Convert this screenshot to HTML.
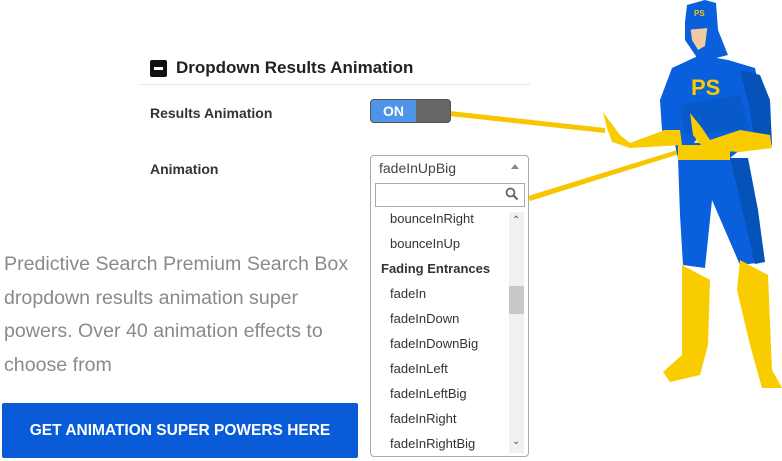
<!DOCTYPE html>
<html><head><style>
body{margin:0;width:782px;height:461px;background:#fff;position:relative;overflow:hidden;font-family:"Liberation Sans",sans-serif;color:#2b2b2b}
.a{position:absolute}
.hdr{left:140px;top:58px;width:390px;height:26px;border-bottom:1px solid #e6e6e6}
.opt{left:390px;font-size:13px;color:#333}
</style></head><body>
<div class="a hdr"></div>
<div class="a" style="left:150px;top:60px;width:17px;height:17px;background:#111;border-radius:2px"><div class="a" style="left:4px;top:7px;width:9px;height:3px;background:#fff"></div></div>
<div class="a" style="left:176px;top:58px;font-size:17px;font-weight:bold;color:#222">Dropdown Results Animation</div>
<div class="a" style="left:150px;top:105px;font-size:14px;font-weight:bold;color:#333">Results Animation</div>
<div class="a" style="left:150px;top:161px;font-size:14px;font-weight:bold;color:#333">Animation</div>
<svg class="a" style="left:0;top:0" width="782" height="461">
<polygon points="450,111 605,128 605,133 450,116" fill="#f7c600"/>
<polygon points="528,196 690,146 692,150 530,201" fill="#f7c600"/>
</svg>
<div class="a" style="left:370px;top:99px;width:81px;height:24px;background:#666;border-radius:4px;overflow:hidden;border:1px solid #555;box-sizing:border-box"><div style="width:45px;height:100%;background:#4f94e8;color:#fff;font-weight:bold;font-size:14px;text-align:center;line-height:22px">ON</div></div>
<div class="a" style="left:370px;top:155px;width:159px;height:302px;border:1px solid #aaa;border-radius:4px;box-sizing:border-box;background:#fff"></div>
<div class="a" style="left:379px;top:160px;font-size:14px;color:#444">fadeInUpBig</div>
<div class="a" style="left:511px;top:164px;width:0;height:0;border-left:4px solid transparent;border-right:4px solid transparent;border-bottom:5px solid #888"></div>
<div class="a" style="left:375px;top:183px;width:150px;height:24px;border:1px solid #aaa;box-sizing:border-box"></div>
<svg class="a" style="left:505px;top:187px" width="14" height="14"><circle cx="5.5" cy="5.5" r="4" fill="none" stroke="#666" stroke-width="1.8"/><line x1="8.5" y1="8.5" x2="12.5" y2="12.5" stroke="#666" stroke-width="2.2"/></svg>
<div class="a" style="left:509px;top:212px;width:15px;height:241px;background:#f1f1f1"></div>
<div class="a" style="left:509px;top:286px;width:15px;height:28px;background:#c8c8c8"></div>
<div class="a" style="left:512px;top:215px;font-size:10px;color:#555">&#8963;</div>
<div class="a" style="left:512px;top:436px;font-size:10px;color:#555">&#8964;</div>
<div class="a opt" style="top:211px">bounceInRight</div>
<div class="a opt" style="top:236px">bounceInUp</div>
<div class="a" style="left:381px;top:261px;font-size:13px;font-weight:bold;color:#333">Fading Entrances</div>
<div class="a opt" style="top:286px">fadeIn</div>
<div class="a opt" style="top:311px">fadeInDown</div>
<div class="a opt" style="top:336px">fadeInDownBig</div>
<div class="a opt" style="top:361px">fadeInLeft</div>
<div class="a opt" style="top:386px">fadeInLeftBig</div>
<div class="a opt" style="top:411px">fadeInRight</div>
<div class="a opt" style="top:436px">fadeInRightBig</div>
<div class="a" style="left:4px;top:248px;font-size:19.6px;line-height:33.5px;color:#8a8a8a;width:360px">Predictive Search Premium Search Box dropdown results animation super powers. Over 40 animation effects to choose from</div>
<div class="a" style="left:2px;top:403px;width:356px;height:55px;background:#0a5bd8;border-radius:2px;color:#fff;font-weight:bold;font-size:15.5px;text-align:center;line-height:55px">GET ANIMATION SUPER POWERS HERE</div>
<svg class="a" style="left:590px;top:0" width="192" height="400">
<!-- legs -->
<polygon points="88,158 155,158 165,200 175,262 150,265 122,200 115,268 93,265 90,215" fill="#0a5fdc"/>
<polygon points="140,158 158,158 168,210 175,262 165,264 150,200" fill="#0553b8"/>
<!-- boots -->
<polygon points="92,265 120,280 118,345 110,375 80,382 73,372 92,355" fill="#f9cc00"/>
<polygon points="150,260 178,275 182,370 192,388 172,388 160,345 147,290" fill="#f9cc00"/>
<!-- torso -->
<polygon points="82,68 110,55 138,60 165,68 172,100 178,145 150,150 140,158 88,158 84,140 72,130 70,100" fill="#0a5fdc"/>
<polygon points="150,70 170,75 180,100 182,145 165,148 160,110" fill="#0553b8"/>
<polygon points="90,105 150,95 160,130 95,135" fill="#0553b8" opacity=".5"/>
<!-- head -->
<polygon points="97,5 115,0 126,3 128,30 138,55 110,62 95,40 95,22" fill="#0a5fdc"/>
<polygon points="100,24 118,22 115,46 108,50 102,40" fill="#f3c9a0"/>
<polygon points="96,22 118,20 118,28 96,30" fill="#0a5fdc"/>
<text x="104" y="16" font-size="8" fill="#f9cc00" font-family="Liberation Sans" font-weight="bold">PS</text>
<text x="101" y="95" font-size="22" fill="#f9cc00" font-family="Liberation Sans" font-weight="bold">PS</text>
<!-- belt -->
<polygon points="88,145 140,145 140,160 88,160" fill="#f9cc00"/>
<polygon points="104,143 112,130 120,143" fill="#ffe24d"/>
<!-- left arm glove -->
<polygon points="13,112 30,135 40,143 75,130 90,130 92,145 40,148 22,142 17,128" fill="#f9cc00"/>
<!-- right hand -->
<polygon points="100,113 112,128 120,140 150,130 180,135 182,148 150,152 115,150 103,135" fill="#f9cc00"/>
</svg>
</body></html>
